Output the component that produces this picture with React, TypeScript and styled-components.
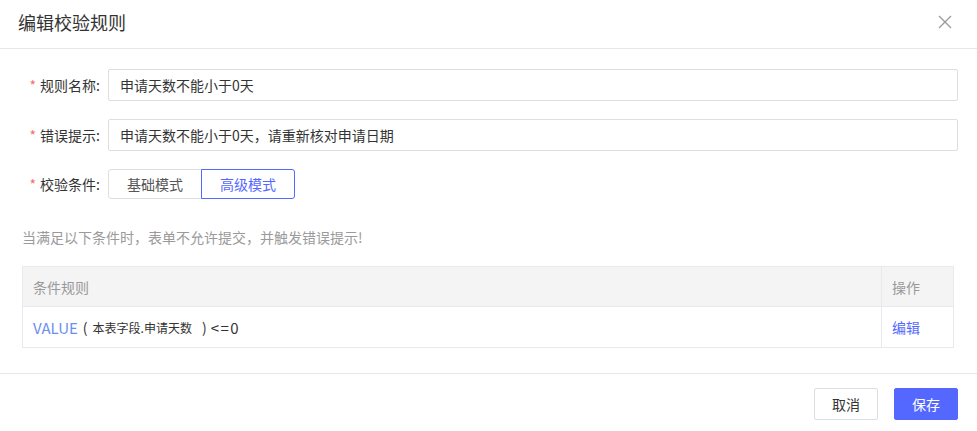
import React from "react";
import styled, { createGlobalStyle } from "styled-components";

const GlobalStyle = createGlobalStyle`
  html, body { margin: 0; padding: 0; background: #fff; }
  body { font-family: "Noto Sans CJK SC", "Noto Sans", sans-serif; color: #333; }
  * { box-sizing: border-box; }
`;

const Dialog = styled.div`
  width: 977px;
  height: 431px;
  background: #fff;
  display: flex;
  flex-direction: column;
`;

const Header = styled.div`
  height: 49px;
  border-bottom: 1px solid #e6e7ec;
  display: flex;
  align-items: center;
  justify-content: space-between;
  padding: 0 25px 4px 18px;
`;

const Title = styled.div`
  font-size: 18px;
  color: #333;
  line-height: 24px;
`;

const CloseBtn = styled.button`
  border: none;
  background: none;
  padding: 0;
  width: 14px;
  height: 14px;
  display: flex;
  cursor: pointer;
`;

const Body = styled.div`
  padding: 20px 19px 0 22px;
  display: flex;
  flex-direction: column;
`;

const FormRow = styled.div`
  display: flex;
  align-items: center;
  margin-bottom: 18px;
`;

const Label = styled.label`
  width: 86px;
  padding-right: 8px;
  text-align: right;
  font-size: 14px;
  color: #333;
  white-space: nowrap;
`;

const Star = styled.span`
  color: #f56c6c;
  margin-right: 4px;
`;

const Input = styled.div`
  flex: 1;
  height: 32px;
  border: 1px solid #dcdee3;
  border-radius: 2px;
  padding: 0 11px;
  font-size: 14px;
  color: #333;
  display: flex;
  align-items: center;
`;

const Segmented = styled.div`
  display: flex;
`;

const SegButton = styled.button<{ $active?: boolean; $first?: boolean }>`
  width: 94px;
  height: 30px;
  font-family: inherit;
  font-size: 14px;
  background: #fff;
  cursor: pointer;
  color: ${(p) => (p.$active ? "#5468ff" : "#555")};
  border: 1px solid ${(p) => (p.$active ? "#5468ff" : "#dcdee3")};
  border-radius: ${(p) => (p.$first ? "3px 0 0 3px" : "0 3px 3px 0")};
  margin-left: ${(p) => (p.$first ? "0" : "-1px")};
  position: relative;
  z-index: ${(p) => (p.$active ? 1 : 0)};
`;

const Hint = styled.div`
  font-size: 14px;
  color: #9a9a9a;
  line-height: 20px;
  margin-top: 10px;
  margin-bottom: 19px;
`;

const Table = styled.div`
  width: 932px;
  border: 1px solid #e8e9ee;
  display: grid;
  grid-template-columns: 1fr 72px;
`;

const HeadCell = styled.div<{ $last?: boolean }>`
  height: 40px;
  background: #f4f4f5;
  border-bottom: 1px solid #e8e9ee;
  border-left: ${(p) => (p.$last ? "1px solid #e8e9ee" : "none")};
  padding-left: 10px;
  display: flex;
  align-items: center;
  font-size: 14px;
  color: #999;
`;

const Cell = styled.div<{ $last?: boolean }>`
  height: 40px;
  border-left: ${(p) => (p.$last ? "1px solid #e8e9ee" : "none")};
  padding-left: 10px;
  display: flex;
  align-items: center;
  font-size: 14px;
  color: #333;
`;

const ValueTag = styled.span`
  color: #6a8ff0;
  font-size: 15px;
`;

const Paren = styled.span<{ $right?: boolean }>`
  margin: ${(p) => (p.$right ? "0 4px 0 10px" : "0 5px 0 5px")};
  color: #333;
`;

const FieldText = styled.span`
  font-size: 12px;
  color: #333;
`;

const Expr = styled.span`
  font-size: 15px;
  letter-spacing: 1.5px;
  color: #333;
`;

const Link = styled.a`
  color: #5468ff;
  font-size: 14px;
  text-decoration: none;
  cursor: pointer;
`;

const Footer = styled.div`
  margin-top: 25px;
  border-top: 1px solid #e6e7ec;
  padding: 14px 19px 0 0;
  display: flex;
  justify-content: flex-end;
  gap: 16px;
`;

const FooterButton = styled.button<{ $primary?: boolean }>`
  width: 64px;
  height: 32px;
  border-radius: 2px;
  font-family: inherit;
  font-size: 14px;
  cursor: pointer;
  background: ${(p) => (p.$primary ? "#5468ff" : "#fff")};
  color: ${(p) => (p.$primary ? "#fff" : "#333")};
  border: 1px solid ${(p) => (p.$primary ? "#5468ff" : "#dcdee3")};
`;

export default function App() {
  return (
    <>
      <GlobalStyle />
      <Dialog>
        <Header>
          <Title>编辑校验规则</Title>
          <CloseBtn aria-label="close">
            <svg width="14" height="14" viewBox="0 0 14 14">
              <path d="M1 1 L13 13 M13 1 L1 13" stroke="#999" strokeWidth="1.3" fill="none" />
            </svg>
          </CloseBtn>
        </Header>
        <Body>
          <FormRow>
            <Label><Star>*</Star>规则名称:</Label>
            <Input>申请天数不能小于0天</Input>
          </FormRow>
          <FormRow>
            <Label><Star>*</Star>错误提示:</Label>
            <Input>申请天数不能小于0天，请重新核对申请日期</Input>
          </FormRow>
          <FormRow>
            <Label><Star>*</Star>校验条件:</Label>
            <Segmented>
              <SegButton $first>基础模式</SegButton>
              <SegButton $active>高级模式</SegButton>
            </Segmented>
          </FormRow>
          <Hint>当满足以下条件时，表单不允许提交，并触发错误提示!</Hint>
          <Table>
            <HeadCell>条件规则</HeadCell>
            <HeadCell $last>操作</HeadCell>
            <Cell>
              <ValueTag>VALUE</ValueTag>
              <Paren>(</Paren>
              <FieldText>本表字段.申请天数</FieldText>
              <Paren $right>)</Paren>
              <Expr>&lt;=0</Expr>
            </Cell>
            <Cell $last>
              <Link>编辑</Link>
            </Cell>
          </Table>
        </Body>
        <Footer>
          <FooterButton>取消</FooterButton>
          <FooterButton $primary>保存</FooterButton>
        </Footer>
      </Dialog>
    </>
  );
}
